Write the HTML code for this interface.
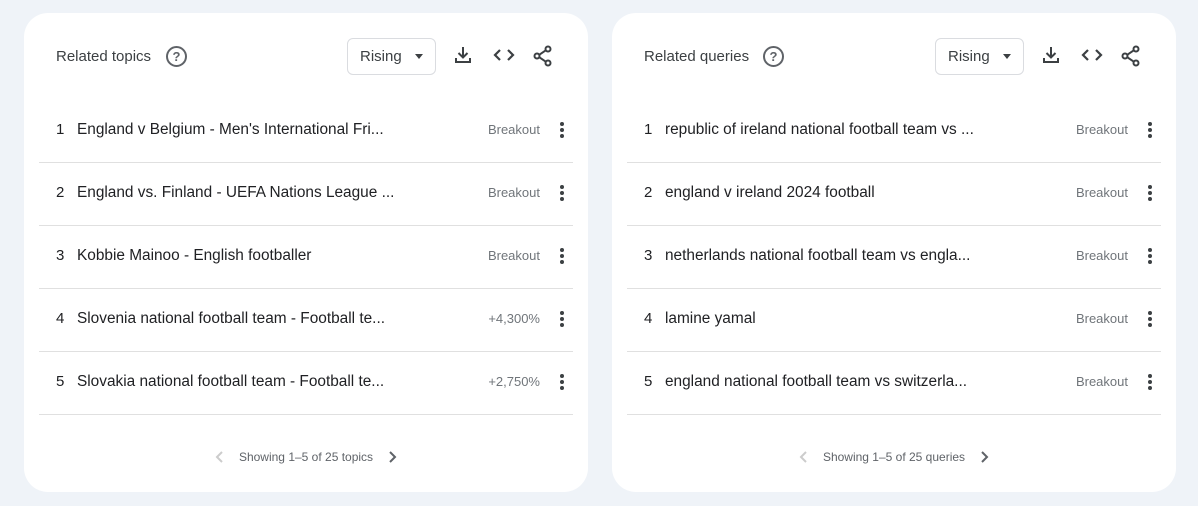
<!DOCTYPE html>
<html><head><style>
body{margin:0;width:1198px;height:506px;background:#eff3f8;font-family:"Liberation Sans",Arial,sans-serif;position:relative;overflow:hidden}
.card{position:absolute;top:13px;width:564px;height:479px;background:#fff;border-radius:24px}
.title{position:absolute;left:32px;top:35px;font-size:15px;color:#3c4043}
.help{position:absolute;top:33px;width:17px;height:17px;border:2px solid #5f6368;border-radius:50%;font-size:13px;font-weight:bold;color:#5f6368;text-align:center;line-height:17px}
.btn{position:absolute;left:323px;top:25px;width:87px;height:35px;border:1px solid #dadce0;border-radius:6px;font-size:15px;color:#3c4043}
.btn span{position:absolute;left:12px;top:9px}
.btn i{position:absolute;left:67px;top:15px;border:4px solid transparent;border-top:5px solid #3c4043;border-bottom:0}
.ic{position:absolute;top:32px}
.row{position:absolute;left:15px;width:534px;height:63px;border-bottom:1px solid #e0e0e0}
.n{position:absolute;left:17px;top:22px;font-size:15px;color:#202124}
.t{position:absolute;left:38px;top:22px;font-size:15.4px;color:#202124}
.v{position:absolute;right:33px;top:23px;font-size:13px;color:#70757a}
.d{position:absolute;right:9px;top:23px;width:4px}
.d b{display:block;width:4px;height:4px;background:#3c4043;border-radius:50%;margin-bottom:2px}
.foot{position:absolute;top:437px;width:100%;font-size:12px;color:#5f6368;display:flex;justify-content:center;align-items:center;gap:14px}
</style></head><body>
<div class="card" style="left:24px">
<div class="title">Related topics</div><div class="help" style="left:142px">?</div>
<div class="btn"><span>Rising</span><i></i></div>
<svg class="ic" style="left:429px" width="20" height="20" viewBox="0 0 20 20" fill="none" stroke="#3c4043" stroke-width="2"><path d="M10 2v10M5.5 8l4.5 4.5L14.5 8M3 13v4h14v-4"/></svg>
<svg class="ic" style="left:469px" width="22" height="20" viewBox="0 0 22 20" fill="none" stroke="#3c4043" stroke-width="2.2"><path d="M7 5l-5 5 5 5M15 5l5 5-5 5"/></svg>
<svg class="ic" style="left:509px" width="20" height="22" viewBox="0 0 20 22" fill="none" stroke="#3c4043" stroke-width="2"><circle cx="15" cy="4" r="2.5"/><circle cx="4" cy="11" r="2.5"/><circle cx="15" cy="18" r="2.5"/><path d="M6.2 9.8l6.6-4.5M6.2 12.2l6.6 4.5"/></svg>
<div class="row" style="top:86px"><span class="n">1</span><span class="t">England v Belgium - Men's International Fri...</span><span class="v">Breakout</span><span class="d"><b></b><b></b><b></b></span></div>
<div class="row" style="top:149px"><span class="n">2</span><span class="t">England vs. Finland - UEFA Nations League ...</span><span class="v">Breakout</span><span class="d"><b></b><b></b><b></b></span></div>
<div class="row" style="top:212px"><span class="n">3</span><span class="t">Kobbie Mainoo - English footballer</span><span class="v">Breakout</span><span class="d"><b></b><b></b><b></b></span></div>
<div class="row" style="top:275px"><span class="n">4</span><span class="t">Slovenia national football team - Football te...</span><span class="v">+4,300%</span><span class="d"><b></b><b></b><b></b></span></div>
<div class="row" style="top:338px"><span class="n">5</span><span class="t">Slovakia national football team - Football te...</span><span class="v">+2,750%</span><span class="d"><b></b><b></b><b></b></span></div>
<div class="foot"><svg width="10" height="14" viewBox="0 0 10 14" fill="none" stroke="#ccc" stroke-width="2"><path d="M7 2L2 7l5 5"/></svg><span>Showing 1–5 of 25 topics</span><svg width="10" height="14" viewBox="0 0 10 14" fill="none" stroke="#5f6368" stroke-width="2"><path d="M3 2l5 5-5 5"/></svg></div>
</div>
<div class="card" style="left:612px">
<div class="title">Related queries</div><div class="help" style="left:151px">?</div>
<div class="btn"><span>Rising</span><i></i></div>
<svg class="ic" style="left:429px" width="20" height="20" viewBox="0 0 20 20" fill="none" stroke="#3c4043" stroke-width="2"><path d="M10 2v10M5.5 8l4.5 4.5L14.5 8M3 13v4h14v-4"/></svg>
<svg class="ic" style="left:469px" width="22" height="20" viewBox="0 0 22 20" fill="none" stroke="#3c4043" stroke-width="2.2"><path d="M7 5l-5 5 5 5M15 5l5 5-5 5"/></svg>
<svg class="ic" style="left:509px" width="20" height="22" viewBox="0 0 20 22" fill="none" stroke="#3c4043" stroke-width="2"><circle cx="15" cy="4" r="2.5"/><circle cx="4" cy="11" r="2.5"/><circle cx="15" cy="18" r="2.5"/><path d="M6.2 9.8l6.6-4.5M6.2 12.2l6.6 4.5"/></svg>
<div class="row" style="top:86px"><span class="n">1</span><span class="t">republic of ireland national football team vs ...</span><span class="v">Breakout</span><span class="d"><b></b><b></b><b></b></span></div>
<div class="row" style="top:149px"><span class="n">2</span><span class="t">england v ireland 2024 football</span><span class="v">Breakout</span><span class="d"><b></b><b></b><b></b></span></div>
<div class="row" style="top:212px"><span class="n">3</span><span class="t">netherlands national football team vs engla...</span><span class="v">Breakout</span><span class="d"><b></b><b></b><b></b></span></div>
<div class="row" style="top:275px"><span class="n">4</span><span class="t">lamine yamal</span><span class="v">Breakout</span><span class="d"><b></b><b></b><b></b></span></div>
<div class="row" style="top:338px"><span class="n">5</span><span class="t">england national football team vs switzerla...</span><span class="v">Breakout</span><span class="d"><b></b><b></b><b></b></span></div>
<div class="foot"><svg width="10" height="14" viewBox="0 0 10 14" fill="none" stroke="#ccc" stroke-width="2"><path d="M7 2L2 7l5 5"/></svg><span>Showing 1–5 of 25 queries</span><svg width="10" height="14" viewBox="0 0 10 14" fill="none" stroke="#5f6368" stroke-width="2"><path d="M3 2l5 5-5 5"/></svg></div>
</div>
</body></html>
